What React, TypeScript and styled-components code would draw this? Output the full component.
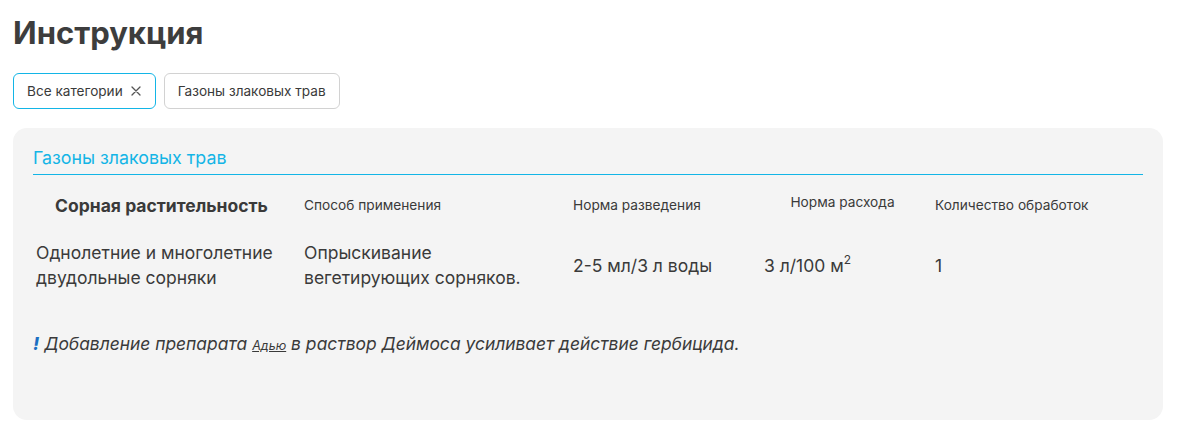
import React from 'react';
import styled, { createGlobalStyle } from 'styled-components';

const GlobalStyle = createGlobalStyle`
  html, body {
    margin: 0;
    padding: 0;
    background: #ffffff;
    font-family: Inter, 'Noto Sans', sans-serif;
    color: #3a3a3a;
  }
`;

const ACCENT = '#13b5e6';

const Page = styled.div`
  padding: 13px 15px 0 13px;
`;

const Title = styled.h1`
  margin: 0 0 20px;
  font-size: 31px;
  line-height: 40px;
  font-weight: 700;
  color: #3d3d3d;
`;

const Chips = styled.div`
  display: flex;
  gap: 8px;
  margin-bottom: 19px;
`;

const Chip = styled.button<{ $active?: boolean }>`
  display: flex;
  align-items: center;
  gap: 7px;
  height: 36px;
  padding: 0 13px;
  border-radius: 6px;
  border: 1px solid ${(p) => (p.$active ? ACCENT : '#d2d2d2')};
  background: #fff;
  font-family: inherit;
  font-size: 13.6px;
  color: #3a3a3a;
  cursor: pointer;
  svg {
    width: 12px;
    height: 12px;
  }
`;

const Card = styled.section`
  background: #f4f4f4;
  border-radius: 14px;
  padding: 18px 20px 0 20px;
  height: 292px;
  box-sizing: border-box;
`;

const CardTitle = styled.h2`
  margin: 0;
  padding-bottom: 5px;
  font-size: 17.8px;
  line-height: 23px;
  font-weight: 400;
  color: ${ACCENT};
  border-bottom: 1.5px solid ${ACCENT};
`;

const Table = styled.div`
  display: grid;
  grid-template-columns: 257px 255px 177px 157px 1fr;
  column-gap: 14px;
  margin-top: 19px;
`;

const HeadCell = styled.div<{ $main?: boolean; $center?: boolean; $raise?: boolean }>`
  display: flex;
  align-items: center;
  justify-content: ${(p) => (p.$main || p.$center ? 'center' : 'flex-start')};
  height: 22px;
  font-size: ${(p) => (p.$main ? '17.5px' : '13.7px')};
  font-weight: ${(p) => (p.$main ? 700 : 400)};
  color: #3a3a3a;
  transform: translateY(${(p) => (p.$raise ? '-3px' : '0')});
`;

const Cell = styled.div<{ $pad?: boolean }>`
  display: flex;
  align-items: center;
  min-height: 50px;
  margin-top: 24px;
  padding-left: ${(p) => (p.$pad ? '3px' : '0')};
  font-size: 17.5px;
  line-height: 25px;
  color: #3a3a3a;
  white-space: nowrap;
  sup {
    font-size: 12px;
    line-height: 0;
    vertical-align: 8px;
  }
`;

const Note = styled.p`
  margin: 43px 0 0;
  font-size: 17.4px;
  font-style: italic;
  color: #3a3a3a;
  line-height: 22px;
  b {
    color: #1b6fc2;
    font-weight: 800;
  }
  a {
    font-size: 12.5px;
    color: #3a3a3a;
    text-decoration: underline;
  }
`;

const CloseIcon = () => (
  <svg viewBox="0 0 12 12" fill="none" stroke="#555" strokeWidth="1.3" strokeLinecap="round">
    <path d="M2 2l8 8M10 2l-8 8" />
  </svg>
);

export default function App() {
  return (
    <>
      <GlobalStyle />
      <Page>
        <Title>Инструкция</Title>
        <Chips>
          <Chip $active>
            Все категории
            <CloseIcon />
          </Chip>
          <Chip>Газоны злаковых трав</Chip>
        </Chips>
        <Card>
          <CardTitle>Газоны злаковых трав</CardTitle>
          <Table>
            <HeadCell $main>Сорная растительность</HeadCell>
            <HeadCell>Способ применения</HeadCell>
            <HeadCell>Норма разведения</HeadCell>
            <HeadCell $center $raise>Норма расхода</HeadCell>
            <HeadCell>Количество обработок</HeadCell>

            <Cell $pad>
              Однолетние и многолетние
              <br />
              двудольные сорняки
            </Cell>
            <Cell>
              Опрыскивание
              <br />
              вегетирующих сорняков.
            </Cell>
            <Cell>2-5 мл/3 л воды</Cell>
            <Cell>
              <span>
                3 л/100 м<sup>2</sup>
              </span>
            </Cell>
            <Cell>1</Cell>
          </Table>
          <Note>
            <b>!</b> Добавление препарата <a href="#">Адью</a> в раствор Деймоса усиливает действие гербицида.
          </Note>
        </Card>
      </Page>
    </>
  );
}
